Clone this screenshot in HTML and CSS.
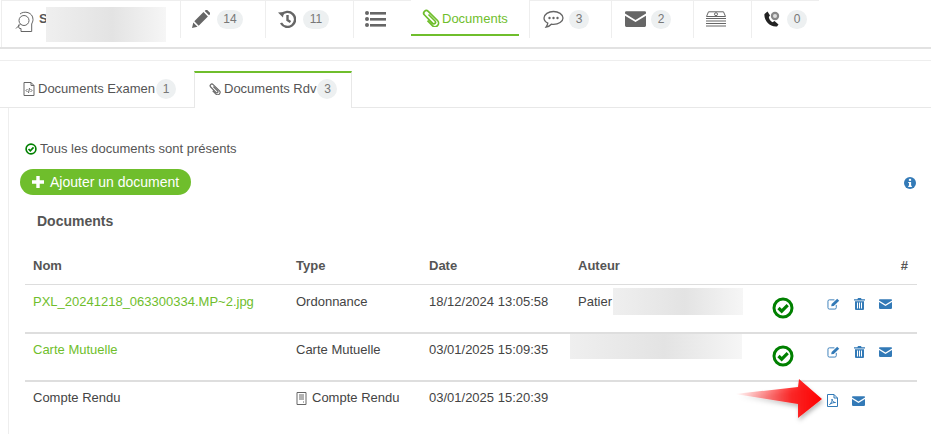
FILE: index.html
```html
<!DOCTYPE html>
<html lang="fr">
<head>
<meta charset="utf-8">
<title>Documents</title>
<link rel="stylesheet" href="styles.css">
</head>
<body>
<svg class="defs" width="0" height="0" aria-hidden="true">
  <defs>
    <symbol id="env" viewBox="0 0 24 18"><path d="M1.500 0h21A1.500 1.500 0 0 1 24 1.500v1.200L12 10 0 2.700V1.500A1.500 1.500 0 0 1 1.500 0z"/><path d="M0 5.200 12 12.500 24 5.200V16.500A1.500 1.500 0 0 1 22.500 18h-21A1.500 1.500 0 0 1 0 16.500z"/></symbol>
    <symbol id="ok" viewBox="0 0 22 22"><circle cx="11" cy="11" r="9" fill="none" stroke="currentColor" stroke-width="3"/><path d="M6.500 11l3.200 3.200 6-6" fill="none" stroke="currentColor" stroke-width="3.200"/></symbol>
    <symbol id="edit" viewBox="0 0 14 13"><path d="M10 7.500V10.500A1.500 1.500 0 0 1 8.500 12H2.500A1.500 1.500 0 0 1 1 10.500V3.500A1.500 1.500 0 0 1 2.500 2H8" fill="none" stroke="currentColor" stroke-width="1"/><path d="M4.500 9 5 6.500 11 .8 13.200 3 7.200 8.700z"/></symbol>
    <symbol id="trash" viewBox="0 0 11 12"><path d="M4 0h3l.6 1.200H11v1.300H0V1.200h3.400zM1 3.300h9V11a1 1 0 0 1-1 1H2a1 1 0 0 1-1-1zM3 4.500v6h1v-6zm2 0v6h1v-6zm2 0v6h1v-6z" fill-rule="evenodd"/></symbol>
    <symbol id="clip" viewBox="0 0 18 18"><path d="M6.500 5.500 13 12a1.600 1.600 0 0 1-2.300 2.300L2.500 6a2.600 2.600 0 0 1 3.700-3.700L15.500 11.500a3.600 3.600 0 0 1-5.100 5.100L5.500 11.700" fill="none" stroke="currentColor" stroke-width="1.700"/></symbol>
  </defs>
</svg>

<nav class="topnav">
  <div class="nav-item nav-patient">
    <svg class="ico" width="20" height="22" viewBox="0 0 20 22" fill="none" stroke="#666" stroke-width="1"><path d="M6 20.500V17.500H5c-.8 0-1.300-.6-1.300-1.400v-2.500M5 3c4-3.500 13-2 13 5.500 0 2-.8 3-1.300 4.500v7.500H6"/><circle cx="9" cy="9.500" r="5"/><path d="M5.500 13 1 17.500"/></svg>
    <b class="patient-initial">S</b>
    <span class="blur blur-name"></span>
  </div>
  <div class="nav-item nav-w85">
    <svg class="ico" width="18" height="18" viewBox="0 0 18 18" fill="#666"><path d="M0 18 1.300 12.500 5.500 16.700zM2.300 11.300 11.500 2.100 15.900 6.500 6.700 15.700zM12.700 1l1-1c.6-.3 1-.3 1.500 0l2.800 2.800c.3.500.3 1 0 1.500l-1 1z"/></svg>
    <span class="badge">14</span>
  </div>
  <div class="nav-item nav-w88">
    <svg class="ico" width="18" height="18" viewBox="0 0 18 18" fill="none" stroke="#666" stroke-width="2.400"><path d="M3.500 5A7.500 7.500 0 1 1 3 13"/><path d="M9.500 5v5l3 2"/><path d="M0 2.500 5.800 2 5 7.500z" fill="#666" stroke="none"/></svg>
    <span class="badge">11</span>
  </div>
  <div class="nav-item nav-list">
    <svg class="ico" width="21" height="16" viewBox="0 0 21 16" fill="#666"><circle cx="2" cy="2" r="2"/><circle cx="2" cy="8" r="2"/><circle cx="2" cy="14" r="2"/><rect x="5" y="1" width="16" height="2.600"/><rect x="5" y="7" width="16" height="2.600"/><rect x="5" y="13" width="16" height="2.600"/></svg>
  </div>
  <div class="nav-active">
    <svg class="ico-clip" width="18" height="18"><use href="#clip"/></svg>
    <span>Documents</span>
  </div>
  <div class="nav-item nav-w82 nav-after">
    <svg class="ico" width="21" height="19" viewBox="0 0 21 19"><path d="M10.500 1.500C5.500 1.500 1 4.300 1 8c0 2.200 1.500 4 3.800 5.200-.2 1.500-1 2.800-1.800 4 2-.3 4-1.500 5.300-3 .7.100 1.500.2 2.200.2 5 0 9.500-2.800 9.500-6.400s-4.500-6.500-9.500-6.500z" fill="none" stroke="#666" stroke-width="1.300"/><circle cx="6.500" cy="8" r="1.200" fill="#666"/><circle cx="10.500" cy="8" r="1.200" fill="#666"/><circle cx="14.500" cy="8" r="1.200" fill="#666"/></svg>
    <span class="badge badge-round">3</span>
  </div>
  <div class="nav-item nav-w82">
    <svg class="ico icon-gray" width="21" height="16"><use href="#env"/></svg>
    <span class="badge badge-round">2</span>
  </div>
  <div class="nav-item nav-w58">
    <svg class="ico" width="20" height="16" viewBox="0 0 20 16" fill="none" stroke="#666" stroke-width="1"><path d="M2.500.8H17.500L19.500 5.500H.5z"/><circle cx="10" cy="3.200" r="1.500"/><path d="M0 7.500h20M0 10h20M0 12.500h20M0 15h20"/></svg>
  </div>
  <div class="nav-item nav-w68 nav-last">
    <svg class="ico" width="16" height="16" viewBox="0 0 16 16"><path d="M.5 3 3.500.5 6 4.500 4.800 6C5 8 6.500 10 8.500 11.200L10.500 10 14.500 13.500 13 15.500C6 16.500-.5 9 .5 3z" fill="#222"/><circle cx="11" cy="5" r="4.200" fill="#888"/><circle cx="11" cy="5" r="2" fill="#ddd"/></svg>
    <span class="badge badge-round">0</span>
  </div>
</nav>

<section class="panel">
  <div class="tabs">
    <div class="tab">
      <svg class="tab-ico" width="12" height="14" viewBox="0 0 12 14" fill="none" stroke="#666" stroke-width="1"><path d="M1 .5H8L11 3.500V13.500H1zM8 .5V3.500H11"/><path d="M4.500 7 3 8.500 4.500 10M7.500 7 9 8.500 7.500 10M6.500 6 5.500 11"/></svg>
      <span>Documents Examen</span><span class="badge badge-tab">1</span>
    </div>
    <div class="tab tab-on">
      <svg class="tab-ico" width="12" height="12"><use href="#clip"/></svg>
      <span>Documents Rdv</span><span class="badge badge-tab">3</span>
    </div>
  </div>

  <div class="content">
    <p class="status"><svg class="status-ico" width="12" height="12"><use href="#ok"/></svg>Tous les documents sont présents</p>
    <div class="toolbar">
      <button class="btn-add"><svg width="12" height="12" viewBox="0 0 12 12" fill="#fff"><path d="M4.300 0h3.400v4.300H12v3.400H7.700V12H4.300V7.700H0V4.300h4.300z"/></svg>Ajouter un document</button>
      <svg class="info" width="12" height="12" viewBox="0 0 13 13"><circle cx="6.500" cy="6.500" r="6.500" fill="#337ab7"/><rect x="5.300" y="2" width="2.400" height="2.200" fill="#fff"/><path d="M4.600 5.300h3.100v4.200h.8v1.300H4.600V9.500h.8V6.600h-.8z" fill="#fff"/></svg>
    </div>
    <h3 class="section-title">Documents</h3>

    <div class="doc-table">
      <div class="row row-head">
        <b>Nom</b><b>Type</b><b>Date</b><b>Auteur</b><span></span><b class="hash">#</b>
      </div>
      <div class="row">
        <a class="doc-link">PXL_20241218_063300334.MP~2.jpg</a>
        <span>Ordonnance</span>
        <span>18/12/2024 13:05:58</span>
        <span class="author">Patier<span class="blur blur-a1"></span></span>
        <svg class="ok-big" width="22" height="22"><use href="#ok"/></svg>
        <span class="actions">
          <svg width="13" height="12"><use href="#edit"/></svg>
          <svg width="11" height="12"><use href="#trash"/></svg>
          <svg width="13" height="10"><use href="#env"/></svg>
        </span>
      </div>
      <div class="row row-thick">
        <a class="doc-link">Carte Mutuelle</a>
        <span>Carte Mutuelle</span>
        <span>03/01/2025 15:09:35</span>
        <span class="author"><span class="blur blur-a2"></span></span>
        <svg class="ok-big" width="22" height="22"><use href="#ok"/></svg>
        <span class="actions">
          <svg width="13" height="12"><use href="#edit"/></svg>
          <svg width="11" height="12"><use href="#trash"/></svg>
          <svg width="13" height="10"><use href="#env"/></svg>
        </span>
      </div>
      <div class="row row-thick row-last">
        <span>Compte Rendu</span>
        <span class="type-ico"><svg width="11" height="13" viewBox="0 0 11 13" fill="none" stroke="#666" stroke-width="1"><path d="M1 .5H10V12.500H1zM3 3H8M3 5H8M3 7H8M7 10H8"/></svg>Compte Rendu</span>
        <span>03/01/2025 15:20:39</span>
        <span></span>
        <span></span>
        <span class="actions actions-last">
          <svg width="11" height="13" viewBox="0 0 11 13" fill="none" stroke="#337ab7" stroke-width="1"><path d="M.5.500H7L10.500 4V12.500H.5zM7 .5V4H10.500"/><path d="M2.500 10.500C4.500 9 5.500 6.500 5 5c0 2 1.500 3.500 3.500 3.500-2 0-4 .5-6 2z"/></svg>
          <svg width="13" height="10"><use href="#env"/></svg>
        </span>
        <svg class="arrow" width="96" height="48" viewBox="0 0 96 48">
          <defs>
            <linearGradient id="ar" x1="0" x2="1" y1="0" y2="0">
              <stop offset="0" stop-color="#f00" stop-opacity="0"/>
              <stop offset=".65" stop-color="#f00" stop-opacity=".8"/>
              <stop offset="1" stop-color="#f00"/>
            </linearGradient>
            <filter id="sh" x="-10%" y="-20%" width="130%" height="150%"><feDropShadow dx="1" dy="3" stdDeviation="2" flood-color="#000" flood-opacity=".3"/></filter>
          </defs>
          <path d="M0 15 63 8 64 0 87 20 63 39 63 25z" fill="url(#ar)" filter="url(#sh)"/>
        </svg>
      </div>
    </div>
  </div>
</section>
</body>
</html>
```
FILE: styles.css
```css
* { box-sizing: border-box; }
html, body { margin: 0; height: 434px; overflow: hidden; background: #fff; }
body { font: 13px/20px "Liberation Sans", Arial, sans-serif; color: #555; }
.defs { position: absolute; }
b { font-weight: 700; }

.topnav { display: flex; height: 49px; border-bottom: 2px solid #e2e2e2; padding-left: 1px; align-items: flex-start; }
.nav-item { display: flex; align-items: center; height: 38px; border-left: 1px solid #eee; border-top: 1px solid #eee; padding-bottom: 1px; }
.nav-patient { width: 179px; height: 47px; padding-left: 13px; align-items: flex-start; padding-top: 10px; position: relative; }
.patient-initial { margin: 0 0 0 4px; color: #555; font-size: 13px; line-height: 16px; }
.blur { display: block; background: linear-gradient(90deg, #efefef, #e3e3e3 55%, #f6f6f6); }
.blur-name { position: absolute; left: 44px; top: 6px; width: 120px; height: 35px; }
.nav-w85 { width: 85px; padding-left: 11px; }
.nav-w88 { width: 88px; padding-left: 12px; }
.nav-list { width: 58px; padding-left: 11px; }
.nav-w82 { width: 82px; padding-left: 13px; }
.nav-w58 { width: 58px; padding-left: 12px; }
.nav-w68 { width: 68px; padding-left: 12px; }
.nav-after { margin-left: 10px; }
.nav-active { width: 108px; height: 36px; border-bottom: 2px solid #6fbe2c; color: #6fbe2c; display: flex; align-items: flex-start; padding: 9px 0 0 11px; }
.ico-clip { color: #6fbe2c; margin-right: 2px; flex: none; }
.icon-gray { fill: #666; color: #666; }
.ico { flex: none; }
.badge { background: #edf0f1; color: #777; border-radius: 10px; font-size: 12px; line-height: 19px; height: 19px; min-width: 26px; text-align: center; margin-left: 7px; }
.badge-round { min-width: 20px; width: 20px; margin-left: 5px; }
.nav-last .badge-round { margin-left: 7px; }

.panel { margin-top: 11px; border-top: 1px solid #eee; padding-top: 10px; }
.tabs { display: flex; height: 37px; border-bottom: 1px solid #e8e8e8; padding-left: 8px; }
.tab { display: flex; align-items: center; padding-left: 15px; width: 186px; height: 36px; }
.tab-on { width: 158px; border: solid #e8e8e8; border-width: 2px 1px 0; border-top-color: #6fbe2c; height: 37px; background: #fff; padding: 0 0 4px 14px; }
.tab-ico { margin-right: 3px; color: #666; flex: none; }
.badge-tab { min-width: 20px; width: 20px; height: 20px; line-height: 20px; margin-left: 1px; }

.content { margin-left: 8px; border-left: 1px solid #eee; height: 326px; padding: 31px 14px 0 11px; }
.status { margin: 0; display: flex; align-items: center; height: 20px; padding-left: 5px; }
.status-ico { color: green; margin-right: 3px; }
.toolbar { display: flex; align-items: center; justify-content: space-between; margin-top: 10px; height: 26px; }
.btn-add { display: flex; align-items: center; gap: 6px; height: 26px; width: 171px; border: 0; border-radius: 13px; background: #6fbe2c; color: #fff; font: 14px "Liberation Sans", Arial, sans-serif; padding: 0 0 0 12px; }
.info { margin: 2px 1px 0 0; }
.section-title { margin: 16px 0 0 17px; font-size: 14px; line-height: 20px; font-weight: 700; color: #555; }

.doc-table { margin: 25px 0 0 5px; width: 892px; }
.row { display: grid; grid-template-columns: 263px 133px 149px 194px 52px 1fr; height: 48px; border-top: 1px solid #ddd; padding: 7px 0 0 8px; color: #444; position: relative; }
.row-head { height: 28px; border: 0; padding: 0 9px 0 8px; color: #555; }
.row > .author { position: relative; }
.row-thick { border-top-width: 2px; padding-top: 6px; border-color: #dedede; }
.row-last { height: 46px; }
.hash { text-align: right; }
.doc-link { color: #6fbe2c; }
.type-ico { display: flex; align-items: center; gap: 5px; align-self: start; }
.ok-big { color: green; margin-top: 5px; }
.actions { display: flex; align-items: center; gap: 14px; color: #337ab7; fill: #337ab7; height: 20px; padding: 4px 0 0 3px; }
.actions-last { gap: 14px; padding-top: 5px; }
.author .blur { position: absolute; }
.blur-a1 { left: 35px; top: -4px; width: 130px; height: 27px; }
.blur-a2 { left: -8px; top: -6px; width: 172px; height: 25px; }
.arrow { position: absolute; left: 710px; top: -3px; }
```
